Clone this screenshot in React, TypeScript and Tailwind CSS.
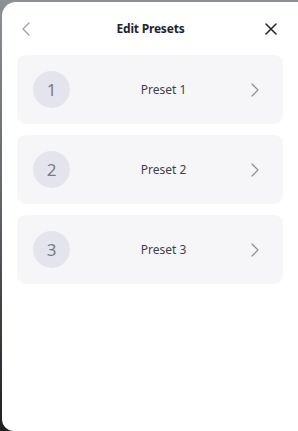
import React from "react";

const Chevron = ({ dir, className }: { dir: "left" | "right"; className?: string }) => (
  <svg width="8" height="14" viewBox="0 0 8 14" className={className} fill="none">
    {dir === "left" ? (
      <path d="M7 1L1 7l6 6" stroke="currentColor" strokeWidth="1.2" strokeLinecap="round" strokeLinejoin="round" />
    ) : (
      <path d="M1 1l6 6-6 6" stroke="currentColor" strokeWidth="1.2" strokeLinecap="round" strokeLinejoin="round" />
    )}
  </svg>
);

export default function App() {
  const presets = [1, 2, 3];
  return (
    <div className="w-[298px] h-[431px] overflow-hidden bg-gradient-to-b from-[#8c9097] via-[#5d6168] to-[#1d1f22] pt-[2px] pl-[2px]" style={{ fontFamily: '"Noto Sans", "Open Sans", sans-serif' }}>
      <div className="h-[429px] w-[300px] bg-white rounded-tl-[14px] rounded-bl-[12px] flex flex-col">
        <div className="flex items-center justify-between h-[53px] pl-[20px] pr-[25px]">
          <button className="text-[#9a9ca3] w-[10px] flex items-center"><Chevron dir="left" /></button>
          <div className="text-[12px] font-bold text-[#1f2330] ml-[4px] tracking-[-0.2px]">Edit Presets</div>
          <button className="text-[#222]">
            <svg width="12" height="12" viewBox="0 0 12 12" fill="none">
              <path d="M1 1l10 10M11 1L1 11" stroke="currentColor" strokeWidth="1.5" strokeLinecap="round" />
            </svg>
          </button>
        </div>
        <div className="flex flex-col gap-[11px] pl-[15px] w-[281px]">
          {presets.map((n) => (
            <div key={n} className="h-[69px] bg-[#f6f6f9] rounded-[9px] flex items-center pl-[16px] pr-[24px]">
              <div className="w-[37px] h-[37px] rounded-full bg-[#e4e4ec] flex items-center justify-center text-[17px] text-[#7a7c84]">{n}</div>
              <div className="flex-1 text-center text-[12px] text-[#3f4249] pl-[6px]">Preset {n}</div>
              <Chevron dir="right" className="text-[#8e9097]" />
            </div>
          ))}
        </div>
      </div>
    </div>
  );
}
